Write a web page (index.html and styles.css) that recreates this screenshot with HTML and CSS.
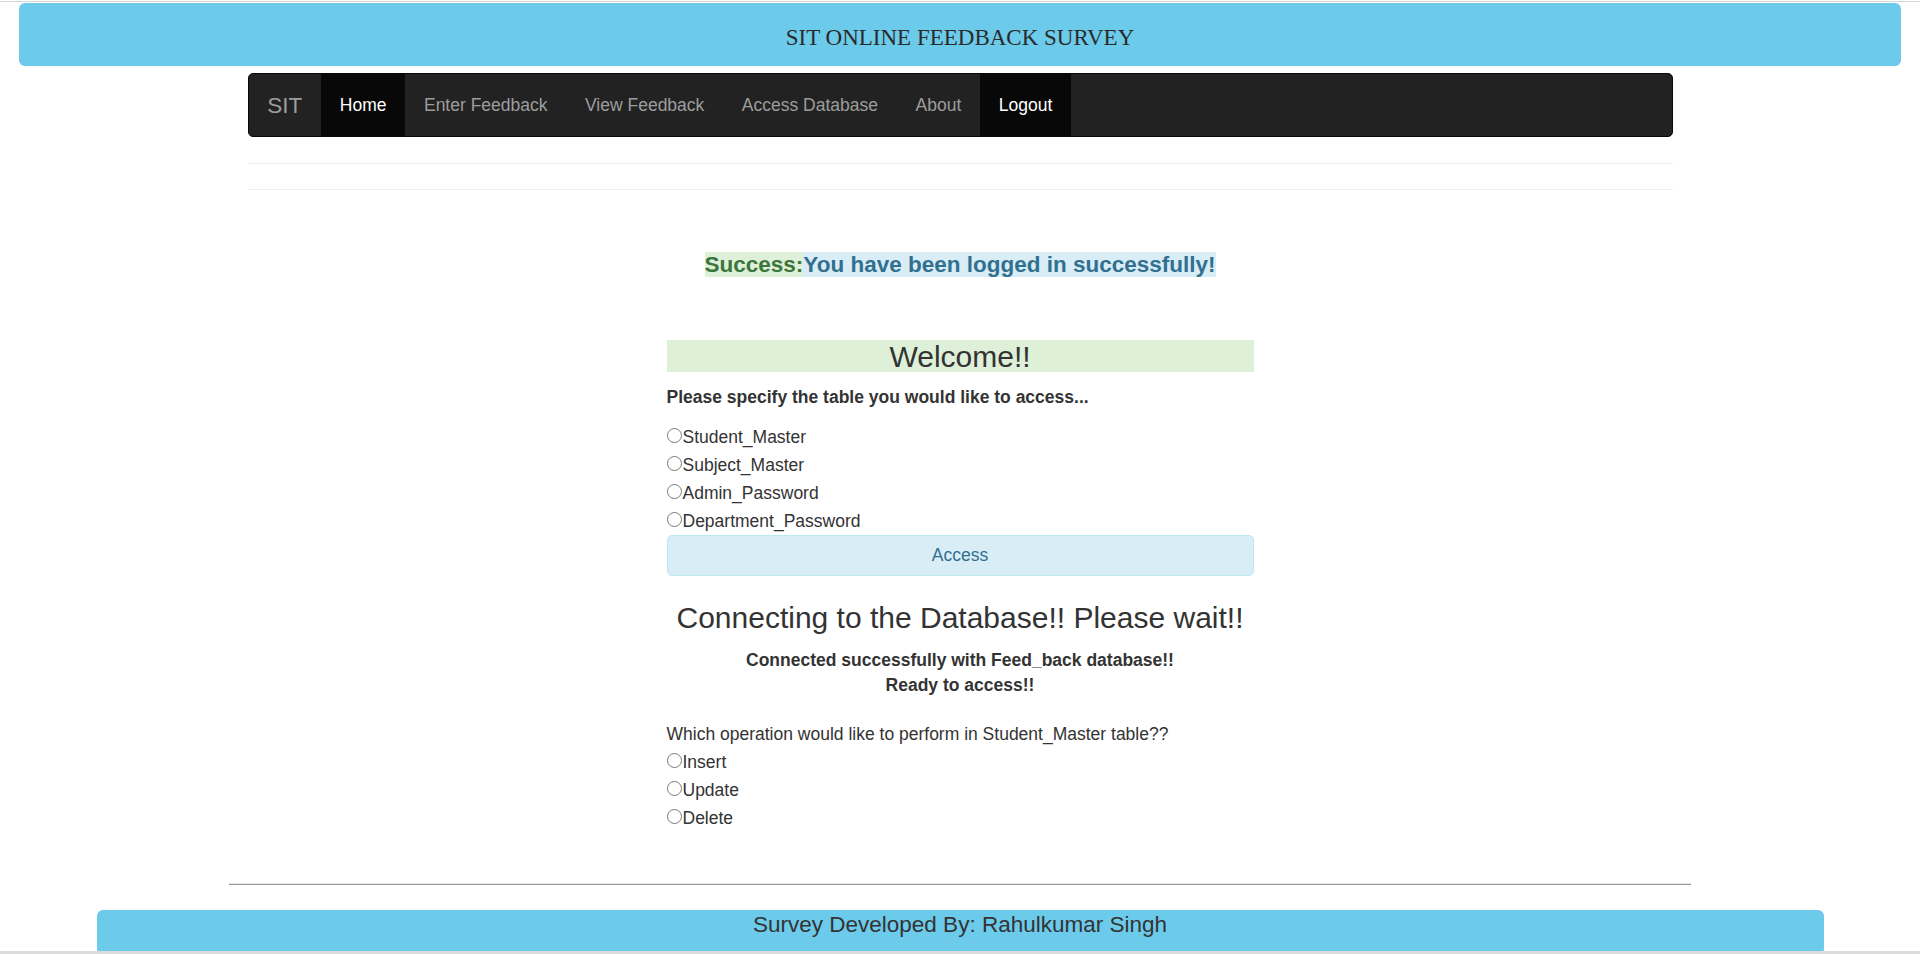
FILE: index.html
```html
<!DOCTYPE html>
<html lang="en">
<head>
<meta charset="utf-8">
<title>SIT Online Feedback Survey</title>
<link rel="stylesheet" href="styles.css">
</head>
<body>
<div class="topline"></div>
<header class="banner"><h1 class="banner-title">SIT ONLINE FEEDBACK SURVEY</h1></header>

<nav class="navbar">
  <a class="brand" href="#">SIT</a>
  <ul class="nav">
    <li class="nav-item active"><a href="#">Home</a></li>
    <li class="nav-item"><a href="#">Enter Feedback</a></li>
    <li class="nav-item"><a href="#">View Feedback</a></li>
    <li class="nav-item"><a href="#">Access Database</a></li>
    <li class="nav-item"><a href="#">About</a></li>
    <li class="nav-item active"><a href="#">Logout</a></li>
  </ul>
</nav>

<div class="rule-wrap">
  <hr class="rule first">
  <hr class="rule second">
</div>

<p class="alert-line"><span class="alert-success">Success:</span><span class="alert-info">You have been logged in successfully!</span></p>

<form class="panel">
  <h3 class="welcome">Welcome!!</h3>
  <p class="prompt">Please specify the table you would like to access...</p>
  <div class="choices">
    <label class="choice"><input type="radio" name="table" class="radio">Student_Master</label>
    <label class="choice"><input type="radio" name="table" class="radio">Subject_Master</label>
    <label class="choice"><input type="radio" name="table" class="radio">Admin_Password</label>
    <label class="choice"><input type="radio" name="table" class="radio">Department_Password</label>
  </div>
  <button type="button" class="btn-access">Access</button>

  <h2 class="connecting">Connecting to the Database!! Please wait!!</h2>
  <p class="connected">Connected successfully with Feed_back database!!<br>Ready to access!!</p>

  <p class="question">Which operation would like to perform in Student_Master table??</p>
  <div class="choices ops">
    <label class="choice"><input type="radio" name="op" class="radio">Insert</label>
    <label class="choice"><input type="radio" name="op" class="radio">Update</label>
    <label class="choice"><input type="radio" name="op" class="radio">Delete</label>
  </div>
</form>

<hr class="footer-rule">
<footer class="footer"><p class="footer-text">Survey Developed By: Rahulkumar Singh</p></footer>
<div class="scrollbar"></div>
</body>
</html>
```

FILE: styles.css
```css
* { box-sizing: border-box; }

html, body {
  margin: 0;
  padding: 0;
  background: #fff;
}

body {
  font-family: "Liberation Sans", Arial, sans-serif;
  font-size: 17.5px;
  line-height: 25px;
  color: #333;
  overflow: hidden;
}

.topline {
  height: 1px;
  margin-top: 1px;
  background: #d6d6d6;
}

.banner {
  margin: 1px 19px 0 19px;
  height: 63px;
  background: #6ccaeb;
  border-radius: 6px;
  padding-top: 22px;
}

.banner-title {
  margin: 0;
  text-align: center;
  font-family: "Liberation Serif", "Times New Roman", serif;
  font-weight: normal;
  font-size: 23px;
  line-height: 26px;
  color: #2a2a2a;
}

.navbar {
  width: 1425px;
  height: 64px;
  margin: 7px auto 0;
  background: #222;
  border: 1px solid #080808;
  border-radius: 5px;
  display: flex;
  align-items: stretch;
  overflow: hidden;
}

.brand {
  display: flex;
  align-items: center;
  padding: 0 18.75px;
  font-size: 22.5px;
  color: #9d9d9d;
  text-decoration: none;
}

.nav {
  list-style: none;
  margin: 0;
  padding: 0;
  display: flex;
}

.nav-item a {
  display: flex;
  align-items: center;
  height: 100%;
  padding: 0 18.75px;
  font-size: 17.5px;
  color: #9d9d9d;
  text-decoration: none;
}

.nav-item.active a {
  color: #fff;
  background: #080808;
}

.rule-wrap {
  width: 1425px;
  margin: 0 auto;
}

.rule {
  height: 0;
  border: 0;
  border-top: 1px solid #eee;
  margin: 0;
}

.rule.first { margin-top: 26px; }
.rule.second { margin-top: 25px; }

.alert-line {
  margin: 62px 0 0;
  text-align: center;
  font-size: 22.5px;
  font-weight: bold;
  line-height: 25px;
}

.alert-success {
  background: #dff0d8;
  color: #3c763d;
}

.alert-info {
  background: #d9edf7;
  color: #31708f;
}

.panel {
  width: 587px;
  margin: 63px auto 0;
}

.welcome {
  margin: 0;
  height: 32px;
  background: #dff0d8;
  text-align: center;
  font-size: 30px;
  font-weight: normal;
  line-height: 33px;
  color: #333;
}

.prompt {
  margin: 13px 0 0;
  font-weight: bold;
}

.choices {
  margin-top: 13px;
  display: flex;
  flex-direction: column;
}

.choice {
  display: flex;
  align-items: center;
  height: 28px;
}

.radio {
  appearance: none;
  -webkit-appearance: none;
  width: 15px;
  height: 15px;
  margin: 0 1px 4px 0;
  border: 1px solid #7a7a7a;
  border-radius: 50%;
  background: #fff;
  flex: none;
}

.btn-access {
  display: block;
  width: 100%;
  height: 41px;
  margin-top: 0;
  background: #d9edf7;
  border: 1px solid #bce8f1;
  border-radius: 5px;
  color: #31708f;
  font-family: inherit;
  font-size: 17.5px;
}

.connecting {
  margin: 25px -20px 0;
  text-align: center;
  font-size: 30px;
  font-weight: normal;
  line-height: 33px;
  color: #333;
}

.connected {
  margin: 13.5px 0 0;
  text-align: center;
  font-weight: bold;
}

.question {
  margin: 24px -40px 0 0;
}

.choices.ops { margin-top: 2px; }

.footer-rule {
  width: 1462px;
  height: 2px;
  margin: 50px auto 0;
  border: 0;
  border-top: 1px solid #e6e6e6;
  border-bottom: 1px solid #9a9a9a;
}

.footer {
  width: 1727px;
  height: 45px;
  margin: 25px auto 0;
  background: #6ccaeb;
  border-radius: 6px;
  padding-top: 2px;
}

.footer-text {
  margin: 0;
  text-align: center;
  font-size: 22.5px;
  line-height: 25px;
  color: #333;
}

.scrollbar {
  position: fixed;
  left: 0;
  right: 0;
  bottom: 0;
  height: 3px;
  background: #dcdcdc;
}
```
